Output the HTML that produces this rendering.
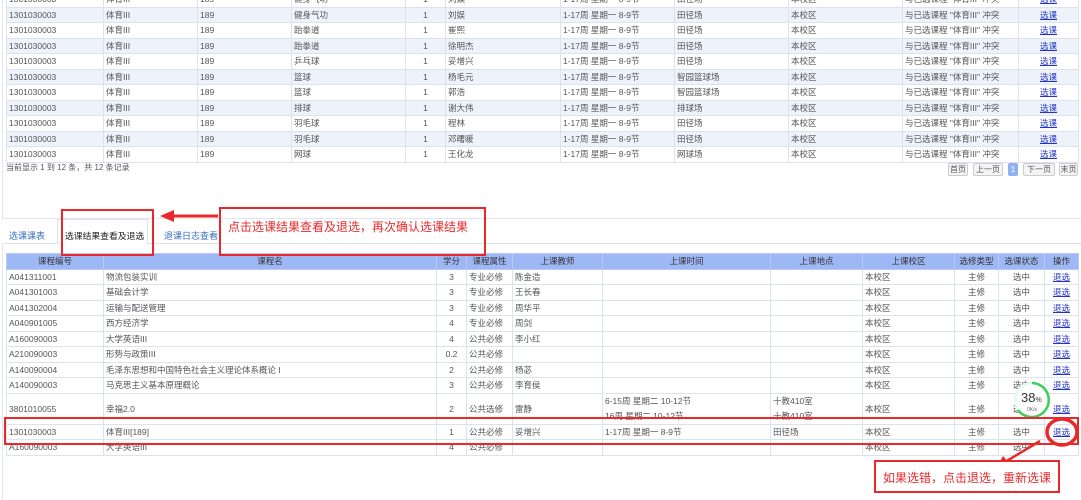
<!DOCTYPE html>
<html><head><meta charset="utf-8"><style>
*{margin:0;padding:0;box-sizing:border-box}
body{width:1081px;height:500px;overflow:hidden;background:#fff;font-family:"Liberation Sans","Noto Sans CJK SC",sans-serif;font-size:8.5px;color:#555;position:relative}
.a{position:absolute}
table{border-collapse:collapse;table-layout:fixed;position:absolute}
td{border:1px solid #dde3ee;height:15.5px;padding:0 2px;white-space:nowrap;overflow:hidden;line-height:14px}
tr.e td{background:#eef3fb}
a{color:#2233cc;text-decoration:underline}
.c{text-align:center}
.hd td{background:#9db8f5;color:#333;text-align:center;border-color:#b9cbf5}
.pg{position:absolute;top:163px;height:13px;border:1px solid #ccc;border-radius:2px;background:#f4f4f4;font-size:8px;line-height:11px;text-align:center;color:#555}
.red{position:absolute;border:2px solid #e8282b}
</style></head><body>
<div class="a" style="left:2px;top:0;width:1079px;height:219px;border-left:1px solid #e2e6ec;border-bottom:1px solid #e2e6ec"></div>
<table style="left:6px;top:-9px;width:1072px">
<colgroup><col style="width:97px"><col style="width:94px"><col style="width:94px"><col style="width:114px"><col style="width:40px"><col style="width:115px"><col style="width:114px"><col style="width:114px"><col style="width:114px"><col style="width:116px"><col style="width:60px"></colgroup>
<tr><td>1301030003</td><td>体育III</td><td>189</td><td>健身气功</td><td class="c">1</td><td>刘娱</td><td>1-17周 星期一 8-9节</td><td>田径场</td><td>本校区</td><td>与已选课程 "体育III" 冲突</td><td class="c"><a>选课</a></td></tr>
<tr class="e"><td>1301030003</td><td>体育III</td><td>189</td><td>健身气功</td><td class="c">1</td><td>刘娱</td><td>1-17周 星期一 8-9节</td><td>田径场</td><td>本校区</td><td>与已选课程 "体育III" 冲突</td><td class="c"><a>选课</a></td></tr>
<tr><td>1301030003</td><td>体育III</td><td>189</td><td>跆拳道</td><td class="c">1</td><td>崔熙</td><td>1-17周 星期一 8-9节</td><td>田径场</td><td>本校区</td><td>与已选课程 "体育III" 冲突</td><td class="c"><a>选课</a></td></tr>
<tr class="e"><td>1301030003</td><td>体育III</td><td>189</td><td>跆拳道</td><td class="c">1</td><td>徐明杰</td><td>1-17周 星期一 8-9节</td><td>田径场</td><td>本校区</td><td>与已选课程 "体育III" 冲突</td><td class="c"><a>选课</a></td></tr>
<tr><td>1301030003</td><td>体育III</td><td>189</td><td>乒乓球</td><td class="c">1</td><td>妥增兴</td><td>1-17周 星期一 8-9节</td><td>田径场</td><td>本校区</td><td>与已选课程 "体育III" 冲突</td><td class="c"><a>选课</a></td></tr>
<tr class="e"><td>1301030003</td><td>体育III</td><td>189</td><td>篮球</td><td class="c">1</td><td>杨毛元</td><td>1-17周 星期一 8-9节</td><td>智园篮球场</td><td>本校区</td><td>与已选课程 "体育III" 冲突</td><td class="c"><a>选课</a></td></tr>
<tr><td>1301030003</td><td>体育III</td><td>189</td><td>篮球</td><td class="c">1</td><td>郭浩</td><td>1-17周 星期一 8-9节</td><td>智园篮球场</td><td>本校区</td><td>与已选课程 "体育III" 冲突</td><td class="c"><a>选课</a></td></tr>
<tr class="e"><td>1301030003</td><td>体育III</td><td>189</td><td>排球</td><td class="c">1</td><td>谢大伟</td><td>1-17周 星期一 8-9节</td><td>排球场</td><td>本校区</td><td>与已选课程 "体育III" 冲突</td><td class="c"><a>选课</a></td></tr>
<tr><td>1301030003</td><td>体育III</td><td>189</td><td>羽毛球</td><td class="c">1</td><td>程林</td><td>1-17周 星期一 8-9节</td><td>田径场</td><td>本校区</td><td>与已选课程 "体育III" 冲突</td><td class="c"><a>选课</a></td></tr>
<tr class="e"><td>1301030003</td><td>体育III</td><td>189</td><td>羽毛球</td><td class="c">1</td><td>邓曙暖</td><td>1-17周 星期一 8-9节</td><td>田径场</td><td>本校区</td><td>与已选课程 "体育III" 冲突</td><td class="c"><a>选课</a></td></tr>
<tr><td>1301030003</td><td>体育III</td><td>189</td><td>网球</td><td class="c">1</td><td>王化龙</td><td>1-17周 星期一 8-9节</td><td>网球场</td><td>本校区</td><td>与已选课程 "体育III" 冲突</td><td class="c"><a>选课</a></td></tr>
</table>
<div class="a" style="left:6px;top:162px;font-size:8px">当前显示 1 到 12 条，共 12 条记录</div>
<div class="pg" style="left:948px;width:20px">首页</div>
<div class="pg" style="left:973px;width:30px">上一页</div>
<div class="pg" style="left:1008px;width:10px;background:#8fb0f2;border-color:#8fb0f2;color:#fff">1</div>
<div class="pg" style="left:1023px;width:32px">下一页</div>
<div class="pg" style="left:1059px;width:19px">末页</div>

<div class="a" style="left:2px;top:243px;width:1079px;height:1px;background:#dde3ea"></div>
<div class="a" style="left:2px;top:243px;width:1px;height:257px;background:#e2e6ec"></div>
<div class="a" style="left:9px;top:229px;font-size:9px;color:#3a6fc0">选课课表</div>
<div class="a" style="left:57px;top:219px;width:91px;height:25px;background:#fff;border:1px solid #dde3ea;border-bottom:none"></div>
<div class="a" style="left:65px;top:229px;font-size:8.8px;color:#222">选课结果查看及退选</div>
<div class="a" style="left:164px;top:229px;font-size:9px;color:#3a6fc0">退课日志查看</div>

<table style="left:6px;top:253px;width:1072px">
<colgroup><col style="width:97px"><col style="width:333px"><col style="width:30px"><col style="width:46px"><col style="width:90px"><col style="width:168px"><col style="width:92px"><col style="width:92px"><col style="width:44px"><col style="width:46px"><col style="width:34px"></colgroup>
<tr class="hd"><td>课程编号</td><td>课程名</td><td>学分</td><td>课程属性</td><td>上课教师</td><td>上课时间</td><td>上课地点</td><td>上课校区</td><td>选修类型</td><td>选课状态</td><td>操作</td></tr>
<tr><td>A041311001</td><td>物流包装实训</td><td class="c">3</td><td>专业必修</td><td>陈金造</td><td></td><td></td><td>本校区</td><td class="c">主修</td><td class="c">选中</td><td class="c"><a>退选</a></td></tr>
<tr><td>A041301003</td><td>基础会计学</td><td class="c">3</td><td>专业必修</td><td>王长春</td><td></td><td></td><td>本校区</td><td class="c">主修</td><td class="c">选中</td><td class="c"><a>退选</a></td></tr>
<tr><td>A041302004</td><td>运输与配送管理</td><td class="c">3</td><td>专业必修</td><td>周华平</td><td></td><td></td><td>本校区</td><td class="c">主修</td><td class="c">选中</td><td class="c"><a>退选</a></td></tr>
<tr><td>A040901005</td><td>西方经济学</td><td class="c">4</td><td>专业必修</td><td>周剑</td><td></td><td></td><td>本校区</td><td class="c">主修</td><td class="c">选中</td><td class="c"><a>退选</a></td></tr>
<tr><td>A160090003</td><td>大学英语III</td><td class="c">4</td><td>公共必修</td><td>李小红</td><td></td><td></td><td>本校区</td><td class="c">主修</td><td class="c">选中</td><td class="c"><a>退选</a></td></tr>
<tr><td>A210090003</td><td>形势与政策III</td><td class="c">0.2</td><td>公共必修</td><td></td><td></td><td></td><td>本校区</td><td class="c">主修</td><td class="c">选中</td><td class="c"><a>退选</a></td></tr>
<tr><td>A140090004</td><td>毛泽东思想和中国特色社会主义理论体系概论 I</td><td class="c">2</td><td>公共必修</td><td>杨苾</td><td></td><td></td><td>本校区</td><td class="c">主修</td><td class="c">选中</td><td class="c"><a>退选</a></td></tr>
<tr><td>A140090003</td><td>马克思主义基本原理概论</td><td class="c">3</td><td>公共必修</td><td>李育侯</td><td></td><td></td><td>本校区</td><td class="c">主修</td><td class="c">选中</td><td class="c"><a>退选</a></td></tr>
<tr><td style="height:30px">3801010055</td><td>幸福2.0</td><td class="c">2</td><td>公共选修</td><td>雷静</td><td style="line-height:15px">6-15周 星期二 10-12节<br>16周 星期二 10-12节</td><td style="line-height:15px">十教410室<br>十教410室</td><td>本校区</td><td class="c">主修</td><td class="c">选中</td><td class="c"><a>退选</a></td></tr>
<tr><td>1301030003</td><td>体育III[189]</td><td class="c">1</td><td>公共必修</td><td>妥增兴</td><td>1-17周 星期一 8-9节</td><td>田径场</td><td>本校区</td><td class="c">主修</td><td class="c">选中</td><td class="c"><a>退选</a></td></tr>
<tr><td style="height:10px;line-height:6px">A160090003</td><td style="line-height:6px">大学英语III</td><td class="c" style="line-height:6px">4</td><td style="line-height:6px">公共必修</td><td></td><td></td><td></td><td style="line-height:6px">本校区</td><td class="c" style="line-height:6px">主修</td><td class="c" style="line-height:6px">选中</td><td></td></tr>
</table>

<div class="red" style="left:61px;top:209px;width:93px;height:47px"></div>
<div class="red" style="left:219px;top:207px;width:267px;height:49px"></div>
<div class="a" style="left:228px;top:218px;font-size:12px;color:#e8282b">点击选课结果查看及退选，再次确认选课结果</div>
<svg class="a" style="left:0;top:0" width="1081" height="500">
<line x1="218" y1="216" x2="172" y2="216" stroke="#e8282b" stroke-width="3"/>
<polygon points="160,216 174,210 174,222" fill="#e8282b"/>
<circle cx="1032" cy="400" r="17" fill="#fff" stroke="#dfe" stroke-width="2.5"/>
<path d="M1032 383 A17 17 0 1 1 1018 410" fill="none" stroke="#3ccf5a" stroke-width="2.5"/>
<text x="1021" y="402" font-size="13" fill="#333" font-family="Liberation Sans">38<tspan font-size="7">%</tspan></text>
<text x="1027" y="411" font-size="5" fill="#666" font-family="Liberation Sans">0K/s</text>
<rect x="5" y="418" width="1073" height="26" fill="none" stroke="#e8282b" stroke-width="2"/>
<ellipse cx="1062" cy="432" rx="15" ry="13" fill="none" stroke="#e8282b" stroke-width="3.5"/>
<line x1="1040" y1="441" x2="1005" y2="462" stroke="#e8282b" stroke-width="2.5"/>
<polygon points="997,467 1003,456 1010,464" fill="#e8282b"/>
</svg>
<div class="red" style="left:874px;top:460px;width:186px;height:33px;background:#fff"></div>
<div class="a" style="left:883px;top:469px;font-size:12px;color:#e8282b">如果选错，点击退选，重新选课</div>
</body></html>
